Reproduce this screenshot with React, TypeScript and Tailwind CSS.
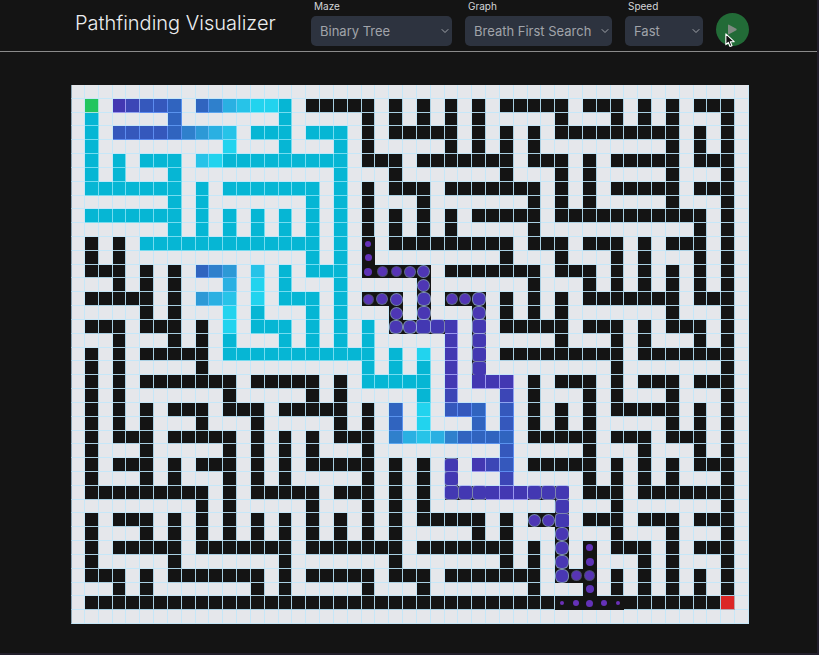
import { ChevronDown } from "lucide-react";

// One character per cell:
//   .    wall            #    open passage
//   S/E  start / finish  1-9  freshly reached cell, growing disc
//   i-q  fading fill     v    settled visited cell
const MAZE = [
  ".................................................",
  ".S.ijkkl.lmopqqv.#####.#.#.#.#.#####.###.#.#.###.",
  ".v.....l.......v.....#.#.#.#.#.....#...#.#.#...#.",
  ".v.kkkklmnop.vvv.vvv.#.#####.#.#.#.#########.#.#.",
  ".v.........q...v...v.#.....#.#.#.#.........#.#.#.",
  ".v.v.vvv.pqvvvvvvvvv.###.#######.###.#.#####.###.",
  ".v.v...v...........v...#.......#...#.#.....#...#.",
  ".vvvvvvv.v.vvvvvvv.v.#.###.#######.#.#.#####.###.",
  ".......v.v.......v.v.#...#.......#.#.#.....#...#.",
  ".vvvvvvv.v.v.v.v.v.v.#.#.#.#.#####.###########.#.",
  ".......v.v.v.v.v.v.v.#.#.#.#.....#...........#.#.",
  ".#.#.vvvvvvvvvvvvv.v.2.#########.###.###.#.###.#.",
  ".#.#.............v.v.3.........#...#...#.#...#.#.",
  ".###.#.#.lmn.p.v.vvv.45567.#######.###.#.#.#.#.#.",
  "...#.#.#...o.q.v...v.....7.......#...#.#.#.#.#.#.",
  ".#####.#.nop.q.vvv.v.567.8.668.#.#.#.#######.###.",
  ".....#.#...q.v...v.v...7.8...8.#.#.#.......#...#.",
  ".###.###.#.q.vvv.v.v.v.8899i.9.#####.###.#.###.#.",
  "...#...#.#.v...v.v.v.v.....i.9.....#...#.#...#.#.",
  ".#.#.#####.vvvvvvvvvvv.v.q.i.9.#########.#######.",
  ".#.#.....#...........v.v.v.i.9.........#.......#.",
  ".#.#.#######.#####.#.vvvvv.i.iii.#.###.#.###.###.",
  ".#.#.......#.....#.#.....v.j...j.#...#.#...#...#.",
  ".#.#.#.###.###.#####.#.l.q.kkl.k.#.#.#.#####.#.#.",
  ".#.#.#...#...#.....#.#.l.q...l.k.#.#.#.....#.#.#.",
  ".#.###.#####.#.#.#.###.mopomllll.#####.###.###.#.",
  ".#...#.....#.#.#.#...#.........k.....#...#...#.#.",
  ".#.###.#.###.#.#.#####.#.#.9.ijk.#####.#.#.#.###.",
  ".#...#.#...#.#.#.....#.#.#.9...j.....#.#.#.#...#.",
  ".#########.#.#####.###.#.#.999iii999.###.#######.",
  ".........#.#.....#...#.#.#.........9...#.......#.",
  ".#.###.#.#.#.#.#.#.#.#.#.#####.#.779.###.###.###.",
  ".#...#.#.#.#.#.#.#.#.#.#.....#.#...8...#...#...#.",
  ".#.#####.#######.#######.#######.#.8.3.###.#.###.",
  ".#.....#.......#.......#.......#.#.8.4...#.#...#.",
  ".###.#.#######.#.#####.###.#######.855.#.#.#.#.#.",
  "...#.#.......#.#.....#...#.......#...4.#.#.#.#.#.",
  ".##################################12321#######E.",
  ".................................................",
];

const FILL: Record<string, string> = {
  ".": "bg-[#e5e7eb] border-[#c6e7f8]",
  "#": "bg-[#141414] border-[#a9cfe2]",
  S: "bg-[#22c55e] border-[#a7e3d8]",
  E: "bg-[#dc2626] border-[#b9a4ae]",
  i: "bg-[#4338b2] border-[#9a97ee]",
  j: "bg-[#3c46b6] border-[#8ea4f0]",
  k: "bg-[#3558bc] border-[#5c8cf0]",
  l: "bg-[#3064bf] border-[#5a93ee]",
  m: "bg-[#2f80cc] border-[#5aa5ee]",
  n: "bg-[#2d99d6] border-[#62b8f0]",
  o: "bg-[#2ab0e2] border-[#6fcdf5]",
  p: "bg-[#27c3e8] border-[#7cdcf7]",
  q: "bg-[#22d3ee] border-[#85e6fa]",
  v: "bg-[#06b6d4] border-[#74dcf0]",
};

const DISC: Record<string, string> = {
  "1": "size-[4px] rounded-full bg-[#6b30b8]",
  "2": "size-[6px] rounded-full bg-[#6531b8]",
  "3": "size-[7px] rounded-full bg-[#6332b8]",
  "4": "size-[8px] rounded-full bg-[#5e33b6]",
  "5": "size-[9px] rounded-full bg-[#5834b5] ring-1 ring-[#7f86c4]/50",
  "6": "size-[10px] rounded-full bg-[#5335b4] ring-1 ring-[#8fa3d8]/60",
  "7": "size-[11px] rounded-full bg-[#4e36b4] ring-1 ring-[#9db8e4]/70",
  "8": "size-[12px] rounded-[5px] bg-[#4937b3] ring-1 ring-[#a5c0ec]/70",
  "9": "size-[13px] rounded-[3px] bg-[#4338b2] ring-1 ring-[#a9b4f2]/70",
};

function Cell({ kind }: { kind: string }) {
  const disc = DISC[kind];
  if (disc) {
    return (
      <div className="flex items-center justify-center bg-[#141414]">
        <div className={`shrink-0 ${disc}`} />
      </div>
    );
  }
  return (
    <div className={`border-r border-b nth-[49n+1]:border-l nth-[49n+1]:border-l-[#8ba3b1] ${FILL[kind]}`} />
  );
}

function Picker({ id, label, options, width }: { id: string; label: string; options: string[]; width: string }) {
  return (
    <div className={width}>
      <label htmlFor={id} className="block pl-[3px] text-[10px] leading-[12px] text-[#d4d6d9]">
        {label}
      </label>
      <div className="relative mt-[4px]">
        <select
          id={id}
          className="block h-[30px] w-full appearance-none rounded-[5px] bg-[#2d333f] pt-[2px] pl-[9px] text-[13px] text-[#a1a4aa]"
        >
          {options.map((option) => (
            <option key={option}>{option}</option>
          ))}
        </select>
        <ChevronDown
          className="pointer-events-none absolute top-[9px] right-[1px] size-[12px] text-[#a1a4aa]"
          strokeWidth={2}
        />
      </div>
    </div>
  );
}

export default function App() {
  return (
    <div className="min-h-screen border-r-2 border-b-2 border-[#221f2b] bg-[#141414] font-['Inter',sans-serif]">
      <header className="flex h-[52px] items-start justify-between border-b border-[#8b8b8b] pr-[68px] pl-[75px]">
        <h1 className="pt-[9px] text-[20px] leading-[28px] font-light text-[#eceef0]">Pathfinding Visualizer</h1>
        <div className="flex items-start gap-[13px]">
          <Picker id="maze" label="Maze" options={["Binary Tree"]} width="w-[141px]" />
          <Picker id="graph" label="Graph" options={["Breath First Search"]} width="w-[147px]" />
          <Picker id="speed" label="Speed" options={["Fast"]} width="w-[78px]" />
          <div className="relative mt-[13px]">
            <button
              type="button"
              aria-label="Run"
              className="flex size-[33px] items-center justify-center rounded-full bg-[#226b37]"
            >
              <svg viewBox="0 0 10 12" className="h-[11px] w-[9px]" fill="#7f8a82">
                <path d="M1 .6 9.3 5.2Q10 6 9.3 6.8L1 11.4Q0 11.6 0 10.6V1.4Q0 .4 1 .6Z" />
              </svg>
            </button>
            <svg viewBox="0 0 12 18" className="pointer-events-none absolute top-[20px] left-[9px] h-[15px] w-[10px]">
              <path
                d="M1 1v13l3-2.8 2 5 2.4-1-2-4.8H11Z"
                fill="#111"
                stroke="#fff"
                strokeWidth="1.3"
                strokeLinejoin="round"
              />
            </svg>
          </div>
        </div>
      </header>
      <main className="pt-[33px] pr-[68px] pb-[20px] pl-[71px]">
        <div className="grid aspect-[678/539] grid-cols-[repeat(49,minmax(0,1fr))] grid-rows-[repeat(39,minmax(0,1fr))] bg-[#c6e7f8]">
          {MAZE.map((row, y) => row.split("").map((kind, x) => <Cell key={`${x}-${y}`} kind={kind} />))}
        </div>
      </main>
    </div>
  );
}
